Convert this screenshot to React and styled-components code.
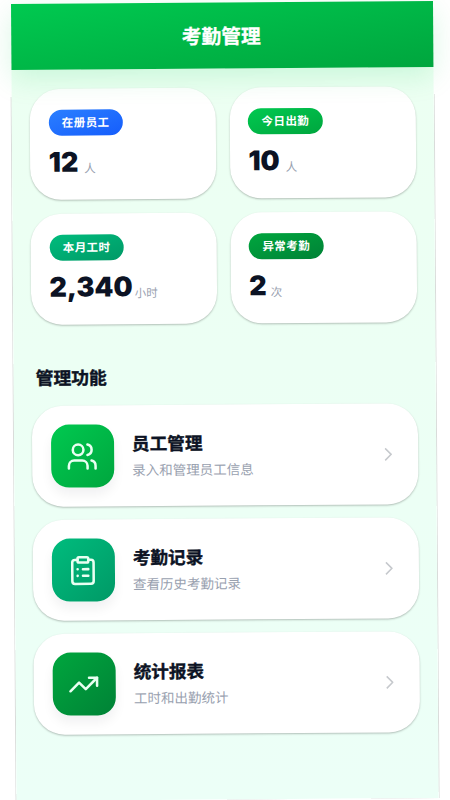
import React from 'react'
import styled, { createGlobalStyle } from "styled-components";

const stats = [
  { label: '在册员工', value: '12', unit: '人', gap: 6, from: '#2b7fff', to: '#155dfc' },
  { label: '今日出勤', value: '10', unit: '人', gap: 6, from: '#00c950', to: '#00a63e' },
  { label: '本月工时', value: '2,340', unit: '小时', gap: 2, from: '#00bc7d', to: '#009966' },
  { label: '异常考勤', value: '2', unit: '次', gap: 4, from: '#00a63e', to: '#008236' },
]

const menu = [
  { title: '员工管理', text: '录入和管理员工信息', icon: 'users', from: '#00c950', to: '#00a63e' },
  { title: '考勤记录', text: '查看历史考勤记录', icon: 'clipboard', from: '#00bc7d', to: '#009966' },
  { title: '统计报表', text: '工时和出勤统计', icon: 'trend', from: '#00a63e', to: '#008236' },
]

const icons = {
  users: (
    <>
      <circle cx="9" cy="7" r="4" />
      <path d="M2 21v-2a4 4 0 0 1 4-4h6a4 4 0 0 1 4 4v2" />
      <path d="M16 3.1a4 4 0 0 1 0 7.8" />
      <path d="M19 15.1a4 4 0 0 1 3 3.9v2" />
    </>
  ),
  clipboard: (
    <>
      <rect x="8" y="2" width="8" height="4" rx="1" />
      <path d="M16 4h2a2 2 0 0 1 2 2v14a2 2 0 0 1-2 2H6a2 2 0 0 1-2-2V6a2 2 0 0 1 2-2h2" />
      <path d="M12 11h4M12 16h4M8 11h.01M8 16h.01" />
    </>
  ),
  trend: (
    <>
      <path d="M22 7l-8.5 8.5-5-5L2 17" />
      <path d="M16 7h6v6" />
    </>
  ),
}

const App = () => {
  return (
    <Viewport>
      <GlobalStyle />
      <Screen>
        <Header>考勤管理</Header>
        <Content>
          <Stats>
            {stats.map(s => (
              <StatCard key={s.label}>
                <Pill $from={s.from} $to={s.to}>{s.label}</Pill>
                <Amount $gap={s.gap}>
                  <Value>{s.value}</Value>
                  <Unit>{s.unit}</Unit>
                </Amount>
              </StatCard>
            ))}
          </Stats>
          <SectionTitle>管理功能</SectionTitle>
          <Menu>
            {menu.map(m => (
              <MenuCard key={m.title}>
                <IconTile $from={m.from} $to={m.to}>
                  <Icon viewBox="0 0 24 24">{icons[m.icon]}</Icon>
                </IconTile>
                <MenuText>
                  <MenuTitle>{m.title}</MenuTitle>
                  <MenuSub>{m.text}</MenuSub>
                </MenuText>
                <Chevron viewBox="0 0 8 14">
                  <path d="M1 1l6 6-6 6" />
                </Chevron>
              </MenuCard>
            ))}
          </Menu>
        </Content>
      </Screen>
    </Viewport>
  )
}

export default App

const GlobalStyle = createGlobalStyle`
  body {
    margin: 0;
    background: #fff;
    font-family: Inter, "Noto Sans CJK SC", sans-serif;
  }

  * {
    box-sizing: border-box;
  }
`;

const Viewport = styled.div`
  height: 800px;
  padding: 4px 0 0 11px;
  overflow: hidden;
`;

/* the whole screen leans slightly to the left */
const Screen = styled.div`
  width: 422px;
  height: 797px;
  transform: rotate(-0.4deg);
  transform-origin: 0 0;
`;

const Header = styled.header`
  position: relative;
  z-index: 1;
  display: flex;
  align-items: center;
  justify-content: center;
  height: 66px;
  padding: 0 2px 1px 0;
  background: linear-gradient(to bottom right, #00c950, #00a63e);
  box-shadow: 0 9px 28px rgba(0, 201, 80, 0.15);
  color: #fff;
  font-size: 19.8px;
  font-weight: 700;
  -webkit-text-stroke: 0.3px #fff;
`;

const Content = styled.main`
  height: 731px;
  padding: 18.5px 18px 18px;
  background: linear-gradient(#ecfff2, #ecfff7);
  box-shadow: 0 27px 0 0 #fff, 1px 27px 0 0 #d9dcda, -1px 27px 0 0 #d9dcda;
  clip-path: inset(0 -3px 0 -3px);
`;

const Stats = styled.section`
  display: grid;
  grid-template-columns: 1fr 1fr;
  gap: 14px 13.5px;
`;

const StatCard = styled.div`
  display: flex;
  flex-direction: column;
  align-items: flex-start;
  height: 111px;
  padding: 21px 18.5px;
  border-radius: 31px;
  background: #fff;
  box-shadow: 0 1px 2px rgba(0, 0, 0, 0.25);
`;

const Pill = styled.span`
  height: 26px;
  padding: 0 13.5px;
  border-radius: 13px;
  background: linear-gradient(to bottom right, ${p => p.$from}, ${p => p.$to});
  color: #fff;
  font-size: 11.5px;
  font-weight: 700;
  letter-spacing: 0.4px;
  line-height: 26px;
`;

const Amount = styled.div`
  display: flex;
  align-items: baseline;
  gap: ${p => p.$gap}px;
  margin-top: 10.5px;
  line-height: 34px;
`;

const Value = styled.span`
  color: #0c1324;
  font-size: 27px;
  font-weight: 900;
`;

const Unit = styled.span`
  position: relative;
  top: 1px;
  color: #99a1af;
  font-size: 11.5px;
`;

const SectionTitle = styled.h2`
  margin: 40.5px 0 0 4px;
  color: #0c1324;
  font-size: 17.8px;
  font-weight: 700;
  line-height: 28px;
  -webkit-text-stroke: 0.4px #0c1324;
`;

const Menu = styled.section`
  display: grid;
  gap: 13px;
  margin-top: 13px;
`;

const MenuCard = styled.div`
  display: flex;
  align-items: center;
  height: 101px;
  padding: 0 26.5px 0 18.5px;
  border-radius: 31px;
  background: #fff;
  box-shadow: 0 1px 2px rgba(0, 0, 0, 0.25);
`;

const IconTile = styled.div`
  display: flex;
  align-items: center;
  justify-content: center;
  width: 63px;
  height: 63px;
  border-radius: 18px;
  background: linear-gradient(135deg, ${p => p.$from}, ${p => p.$to});
  box-shadow: 0 7px 12px rgba(16, 24, 40, 0.06);
`;

const Icon = styled.svg`
  width: 32px;
  height: 32px;
  fill: none;
  stroke: #e9fff2;
  stroke-width: 1.9;
  stroke-linecap: round;
  stroke-linejoin: round;
`;

const MenuText = styled.div`
  flex: 1;
  margin-left: 18.5px;
  padding-top: 3px;
`;

const MenuTitle = styled.div`
  color: #0c1324;
  font-size: 17.6px;
  font-weight: 700;
  line-height: 26px;
  -webkit-text-stroke: 0.4px #0c1324;
`;

const MenuSub = styled.div`
  color: #99a1af;
  font-size: 13.5px;
  line-height: 26px;
`;

const Chevron = styled.svg`
  width: 8px;
  height: 14px;
  fill: none;
  stroke: #c6c9cd;
  stroke-width: 1.5;
`;
